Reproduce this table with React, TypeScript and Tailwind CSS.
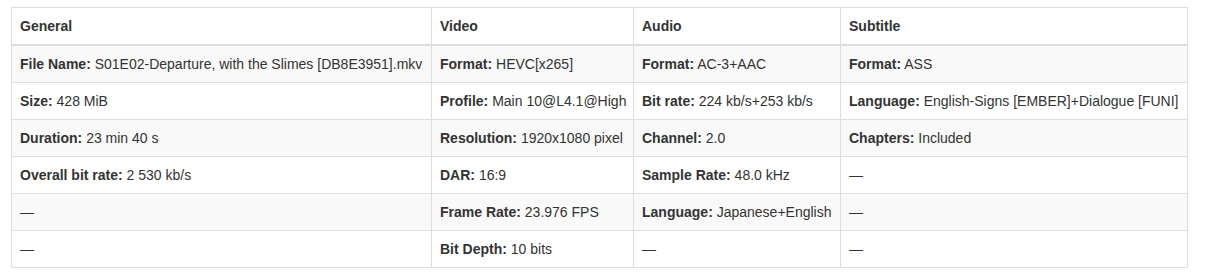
import React from "react";

type Cell = { label?: string; value?: string };

const rows: Cell[][] = [
    [
        { label: "File Name", value: "S01E02-Departure, with the Slimes [DB8E3951].mkv" },
        { label: "Format", value: "HEVC[x265]" },
        { label: "Format", value: "AC-3+AAC" },
        { label: "Format", value: "ASS" },
    ],
    [
        { label: "Size", value: "428 MiB" },
        { label: "Profile", value: "Main 10@L4.1@High" },
        { label: "Bit rate", value: "224 kb/s+253 kb/s" },
        { label: "Language", value: "English-Signs [EMBER]+Dialogue [FUNI]" },
    ],
    [
        { label: "Duration", value: "23 min 40 s" },
        { label: "Resolution", value: "1920x1080 pixel" },
        { label: "Channel", value: "2.0" },
        { label: "Chapters", value: "Included" },
    ],
    [
        { label: "Overall bit rate", value: "2 530 kb/s" },
        { label: "DAR", value: "16:9" },
        { label: "Sample Rate", value: "48.0 kHz" },
        {},
    ],
    [
        {},
        { label: "Frame Rate", value: "23.976 FPS" },
        { label: "Language", value: "Japanese+English" },
        {},
    ],
    [
        {},
        { label: "Bit Depth", value: "10 bits" },
        {},
        {},
    ],
];

const headers = ["General", "Video", "Audio", "Subtitle"];

export default function App() {
    return (
        <div className="bg-white w-[1206px] h-[279px] pt-[7px] pl-[11px] font-['Liberation_Sans',Arial,sans-serif] text-[14px] leading-[20px] text-[#333]">
            <table className="w-[1176px] table-fixed border-collapse border border-[#ddd]">
                <colgroup>
                    <col className="w-[420px]" />
                    <col className="w-[202px]" />
                    <col className="w-[207px]" />
                    <col className="w-[347px]" />
                </colgroup>
                <thead>
                    <tr>
                        {headers.map((h) => (
                            <th
                                key={h}
                                className="border border-[#ddd] border-b-2 px-2 py-2 text-left font-bold whitespace-nowrap"
                            >
                                {h}
                            </th>
                        ))}
                    </tr>
                </thead>
                <tbody>
                    {rows.map((row, i) => (
                        <tr key={i} className={i % 2 === 0 ? "bg-[#f9f9f9]" : "bg-white"}>
                            {row.map((cell, j) => (
                                <td key={j} className="border border-[#ddd] px-2 py-2 whitespace-nowrap">
                                    {cell.label ? (
                                        <>
                                            <b>{cell.label}:</b> {cell.value}
                                        </>
                                    ) : (
                                        "—"
                                    )}
                                </td>
                            ))}
                        </tr>
                    ))}
                </tbody>
            </table>
        </div>
    );
}
